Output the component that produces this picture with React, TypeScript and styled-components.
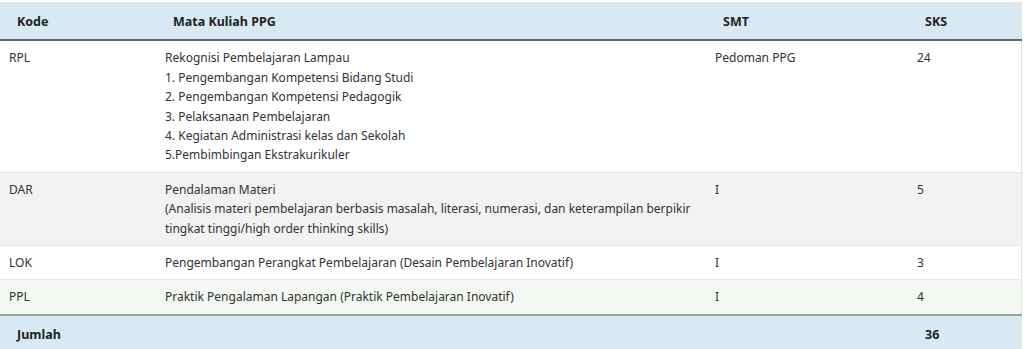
import React from "react";
import styled, { createGlobalStyle } from "styled-components";

const Global = createGlobalStyle`
  html, body { margin: 0; padding: 0; background: #fff; }
  body { font-family: "Noto Sans", "Open Sans", sans-serif; color: #333; }
`;

const Wrap = styled.div`
  padding: 2px 2px 0 0;
`;

const Table = styled.table`
  width: 100%;
  border-collapse: collapse;
  font-size: 12px;
  line-height: 19.4px;
  border: 1px solid #e3e3e3;
  border-left: none;
`;

const HeadRow = styled.tr`
  background: #d9e9f4;
  border-bottom: 2px solid #5a6670;
`;

const Th = styled.th<{ $w?: number }>`
  text-align: left;
  font-weight: 700;
  font-size: 12.5px;
  color: #222;
  padding: 9px 17px 8px;
  ${(p) => (p.$w ? `width: ${p.$w}px;` : "")}
  box-sizing: border-box;
`;

const Row = styled.tr<{ $bg: string }>`
  background: ${(p) => p.$bg};
  border-bottom: 1px solid #e6e6e6;
`;

const Td = styled.td`
  vertical-align: top;
  padding: 7px 9px 7px;
`;

const FootRow = styled.tr`
  background: #d9e9f4;
  border-top: 2px solid #9aa1a6;
`;

const Line = styled.div`
  white-space: nowrap;
`;

const rows = [
  {
    kode: "RPL",
    bg: "#ffffff",
    mk: [
      "Rekognisi Pembelajaran Lampau",
      "1. Pengembangan Kompetensi Bidang Studi",
      "2. Pengembangan Kompetensi Pedagogik",
      "3. Pelaksanaan Pembelajaran",
      "4. Kegiatan Administrasi kelas dan Sekolah",
      "5.Pembimbingan Ekstrakurikuler",
    ],
    smt: "Pedoman PPG",
    sks: "24",
  },
  {
    kode: "DAR",
    bg: "#f2f2f2",
    mk: [
      "Pendalaman Materi",
      "(Analisis materi pembelajaran berbasis masalah, literasi, numerasi, dan keterampilan berpikir",
      "tingkat tinggi/high order thinking skills)",
    ],
    smt: "I",
    sks: "5",
  },
  {
    kode: "LOK",
    bg: "#ffffff",
    mk: ["Pengembangan Perangkat Pembelajaran (Desain Pembelajaran Inovatif)"],
    smt: "I",
    sks: "3",
  },
  {
    kode: "PPL",
    bg: "#f4f8f2",
    mk: ["Praktik Pengalaman Lapangan (Praktik Pembelajaran Inovatif)"],
    smt: "I",
    sks: "4",
  },
];

export default function App() {
  return (
    <Wrap>
      <Global />
      <Table>
        <thead>
          <HeadRow>
            <Th $w={156}>Kode</Th>
            <Th $w={550}>Mata Kuliah PPG</Th>
            <Th $w={202}>SMT</Th>
            <Th>SKS</Th>
          </HeadRow>
        </thead>
        <tbody>
          {rows.map((r) => (
            <Row key={r.kode} $bg={r.bg}>
              <Td>{r.kode}</Td>
              <Td>
                {r.mk.map((l, i) => (
                  <Line key={i}>{l}</Line>
                ))}
              </Td>
              <Td>{r.smt}</Td>
              <Td>{r.sks}</Td>
            </Row>
          ))}
        </tbody>
        <tfoot>
          <FootRow>
            <Th>Jumlah</Th>
            <Th />
            <Th />
            <Th>36</Th>
          </FootRow>
        </tfoot>
      </Table>
    </Wrap>
  );
}
